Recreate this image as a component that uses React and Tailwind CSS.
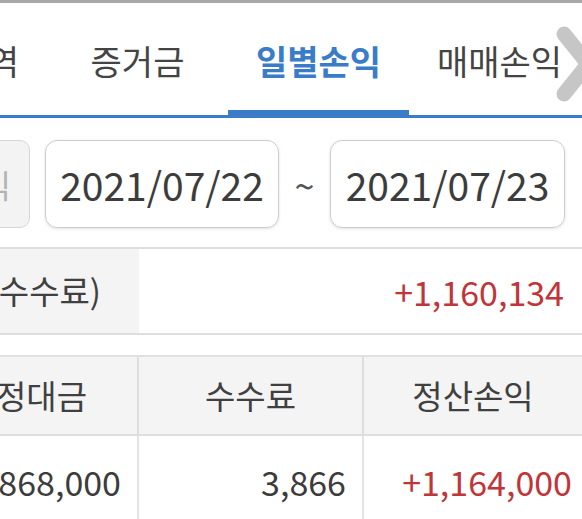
export default function App() {
  const tabs = [
    { label: "체결내역", active: false },
    { label: "증거금", active: false },
    { label: "일별손익", active: true },
    { label: "매매손익", active: false },
  ];
  return (
    <div className="relative w-[582px] h-[519px] overflow-hidden bg-white font-['Noto_Sans_CJK_KR','Noto_Sans',sans-serif] text-[#404040]">
      <div className="h-[3px] bg-[#a8a8a8]" />
      {/* Tabs */}
      <div className="h-[115px] overflow-hidden border-b-[3px] border-[#3b7cc9]">
        <div className="flex h-[112px] ml-[-134px]">
          {tabs.map((t) => (
            <div key={t.label} className="flex w-[181px] shrink-0 flex-col">
              <div
                className={
                  "flex flex-1 items-center justify-center pt-[8px] text-[34px] leading-none whitespace-nowrap " +
                  (t.active ? "font-bold text-[#3b7cc9]" : "text-[#444]")
                }
              >
                {t.label}
              </div>
              <div className={t.active ? "h-[5px] bg-[#3b7cc9]" : "h-[5px]"} />
            </div>
          ))}
        </div>
      </div>
      {/* chevron overlay */}
      <svg
        className="absolute left-[552px] top-[24px]"
        width="44"
        height="80"
        viewBox="0 0 44 80"
      >
        <polyline
          points="12,10 36,40 12,70"
          fill="none"
          stroke="#c6c6c6"
          strokeWidth="15"
          strokeLinecap="round"
          strokeLinejoin="round"
        />
      </svg>
      {/* Date row */}
      <div className="flex h-[131px] items-start overflow-hidden border-b-2 border-[#dedede] pt-[22px]">
        <div className="flex ml-[-60px] h-[88px] w-[90px] shrink-0 items-center justify-end rounded-[10px] border border-[#d6d6d6] bg-[#f3f3f3] pr-[18px] text-[32px] text-[#b3b3b3]">
          익
        </div>
        <div className="ml-[15px] flex h-[88px] w-[234px] shrink-0 items-center justify-center rounded-[12px] border border-[#cdcdcd] shadow-[0_1px_3px_rgba(0,0,0,0.12)] text-[39px] leading-none text-[#3c3c3c]">
          2021/07/22
        </div>
        <div className="flex h-[88px] w-[51px] shrink-0 items-center justify-center text-[36px] leading-none text-[#555]">
          ~
        </div>
        <div className="flex h-[88px] w-[235px] shrink-0 items-center justify-center rounded-[12px] border border-[#cdcdcd] shadow-[0_1px_3px_rgba(0,0,0,0.12)] text-[39px] leading-none text-[#3c3c3c]">
          2021/07/23
        </div>
      </div>
      {/* Summary row */}
      <div className="flex h-[86px] overflow-hidden border-b-2 border-[#dedede]">
        <div className="flex w-[139px] shrink-0 items-center justify-end overflow-hidden bg-[#f4f4f4] pr-[38px] text-[33px] whitespace-nowrap text-[#404040]">
          <span className="shrink-0">손익합계(수수료)</span>
        </div>
        <div className="flex flex-1 items-center justify-end pr-[18px] text-[34px] text-[#c0353a]">
          +1,160,134
        </div>
      </div>
      <div className="h-[20px]" />
      {/* Table */}
      <div className="overflow-hidden border-t-2 border-[#e0e0e0]">
        <div className="flex h-[79px] border-b-2 border-[#dedede] bg-[#f4f4f4] text-[33px] text-[#404040]">
          <div className="flex w-[139px] shrink-0 items-center justify-end overflow-hidden border-r-2 border-[#dedede] pr-[50px] whitespace-nowrap">
            <span className="shrink-0">약정대금</span>
          </div>
          <div className="flex w-[225px] shrink-0 items-center justify-center border-r-2 border-[#dedede]">
            수수료
          </div>
          <div className="flex flex-1 items-center justify-center">정산손익</div>
        </div>
        <div className="flex h-[90px] text-[34px] text-[#3c3c3c]">
          <div className="flex w-[139px] shrink-0 items-center justify-end overflow-hidden border-r-2 border-[#e4e4e4] pr-[16px] whitespace-nowrap">
            <span className="shrink-0">24,868,000</span>
          </div>
          <div className="flex w-[225px] shrink-0 items-center justify-end border-r-2 border-[#e4e4e4] pr-[16px]">
            3,866
          </div>
          <div className="flex flex-1 items-center justify-end pr-[10px] text-[#c0353a]">
            +1,164,000
          </div>
        </div>
      </div>
    </div>
  );
}
